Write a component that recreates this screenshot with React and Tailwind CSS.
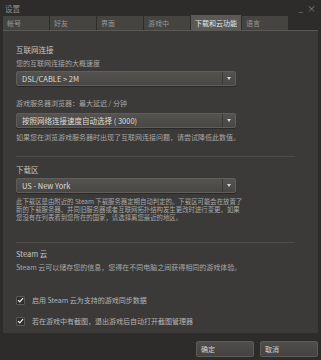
const font = { fontFamily: '"Noto Sans CJK SC", "Liberation Sans", sans-serif' };

const tabs = ['帐号', '好友', '界面', '游戏中', '下载和云功能', '语言'];

const zoneNote = [
  '此下载区是由附近的 Steam 下载服务器定期自动判定的。下载区可能会在放置了',
  '新的下载服务器、并同旧服务器或者互联网拓扑结构发生更改时进行变更。如果',
  '您没有在列表看到您所在的国家，请选择离您最近的地区。',
];

function Dropdown({ value }) {
  return (
    <div className="flex h-[15px] w-[220px] items-center rounded-[2px] border border-[#5f5e5b] bg-gradient-to-b from-[#54534f] to-[#484744] shadow-[0_1px_0_#2a2927]">
      <span className="flex-1 truncate pl-[5px] text-[7.5px] leading-[10px] text-[#dcdcdc]">{value}</span>
      <div className="flex h-full w-[13px] items-center justify-center border-l border-[#3a3936]">
        <div className="h-0 w-0 border-x-[2.5px] border-t-[3px] border-x-transparent border-t-[#d8d8d8]" />
      </div>
    </div>
  );
}

function CheckRow({ label, className }) {
  return (
    <div className={`flex h-[10px] items-center ${className}`}>
      <div className="flex h-[9px] w-[9px] items-center justify-center rounded-[1px] border border-[#5a5956] bg-[#2f2e2c]">
        <svg viewBox="0 0 10 10" className="h-[8px] w-[8px]">
          <path d="M1.5 5.2 L4 7.6 L8.6 2.4" fill="none" stroke="#ececec" strokeWidth="1.8" />
        </svg>
      </div>
      <span className="ml-[7px] whitespace-nowrap text-[7px] leading-[10px] text-[#b4b4b4]">{label}</span>
    </div>
  );
}

export default function App() {
  return (
    <div style={font} className="flex h-[360px] w-[321px] flex-col bg-[#2d2c2a] text-[#b8b8b8]">
      {/* title bar */}
      <div className="flex h-[16px] items-center justify-between px-[5px] pt-[2px]">
        <span className="text-[7.5px] leading-[10px] text-[#8f8e8c]">设置</span>
        <div className="flex items-center gap-[4px] text-[#8a8987]">
          <span className="text-[8px] leading-[10px]">_</span>
          <span className="text-[9px] leading-[10px]">×</span>
        </div>
      </div>

      {/* tabs */}
      <div className="flex h-[14px] items-end gap-[1px] px-[3px]">
        {tabs.map((t, i) => (
          <div
            key={t}
            className={`flex items-center whitespace-nowrap px-[4px] text-[7px] leading-[10px] ${
              i === 4 ? 'h-[15px] w-[50px] bg-[#5a5956] px-[3px] text-[#e6e6e6]' : 'h-[14px] w-[46px] bg-[#454441] text-[#9a9997]'
            }`}
          >
            {t}
          </div>
        ))}
      </div>

      {/* panel */}
      <div className="mx-[3px] border-t border-[#5a5956] bg-[#3b3a38] px-[13px] pt-[14px] pb-[7px]">
        <div className="text-[7.5px] leading-[10px] text-[#c4c4c4]">互联网连接</div>
        <div className="mt-[3px] text-[7px] leading-[10px] text-[#a9a8a6]">您的互联网连接的大概速度</div>
        <div className="mt-[3px]">
          <Dropdown value="DSL/CABLE > 2M" />
        </div>
        <div className="mt-[12px] text-[7px] leading-[10px] text-[#a9a8a6]">游戏服务器浏览器：最大延迟 / 分钟</div>
        <div className="mt-[5px]">
          <Dropdown value="按照网络连接速度自动选择 ( 3000)" />
        </div>
        <div className="mt-[4px] whitespace-nowrap text-[7px] leading-[10px] text-[#a9a8a6]">
          如果您在浏览游戏服务器时出现了互联网连接问题，请尝试降低此数值。
        </div>

        <div className="mt-[14px] mr-[10px] h-px bg-[#4d4c49]" />

        <div className="mt-[8px] text-[7.5px] leading-[10px] text-[#c4c4c4]">下载区</div>
        <div className="mt-[3px]">
          <Dropdown value="US - New York" />
        </div>
        <div className="mt-[5px] flex flex-col">
          {zoneNote.map((line) => (
            <div key={line} className="h-[8px] whitespace-nowrap text-[6.4px] leading-[8px] text-[#a9a8a6]">
              {line}
            </div>
          ))}
        </div>

        <div className="mt-[20px] mr-[10px] h-px bg-[#4d4c49]" />

        <div className="mt-[6px] text-[7.5px] leading-[10px] text-[#c4c4c4]">Steam 云</div>
        <div className="mt-[3px] whitespace-nowrap text-[7px] leading-[10px] text-[#a9a8a6]">
          Steam 云可以储存您的信息，您得在不同电脑之间获得相同的游戏体验。
        </div>

        <CheckRow className="mt-[23px]" label="启用 Steam 云为支持的游戏同步数据" />
        <CheckRow className="mt-[11px]" label="若在游戏中有截图，退出游戏后自动打开截图管理器" />
      </div>

      {/* footer */}
      <div className="flex justify-end gap-[6px] px-[3px] pt-[8px]">
        {['确定', '取消'].map((b) => (
          <div
            key={b}
            className="flex h-[16px] w-[58px] items-center rounded-[2px] border border-[#5c5b58] bg-gradient-to-b from-[#4f4e4b] to-[#444340] px-[4px] text-[7px] leading-[10px] text-[#d4d4d4]"
          >
            {b}
          </div>
        ))}
      </div>
    </div>
  );
}
